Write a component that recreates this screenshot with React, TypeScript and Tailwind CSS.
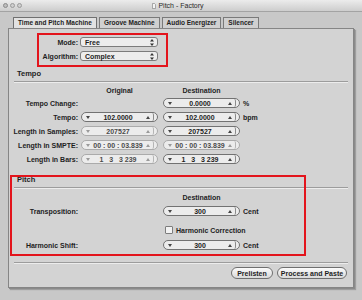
import React from "react";

const Stepper: React.FC<{ value: string; dim?: boolean }> = ({ value, dim }) => (
  <div
    className={`h-[10px] w-[77px] rounded-full border flex items-center pl-[4px] pr-[3px] bg-[#ececec] ${
      dim ? "border-[#ababab] text-[#4a4a4a]" : "border-[#727272] text-[#1c1c1c]"
    }`}
  >
    <svg width="4" height="3" viewBox="0 0 4 3" className="shrink-0">
      <path d="M0 0h4L2 3z" fill={dim ? "#9a9a9a" : "#444"} />
    </svg>
    <span className="flex-1 text-center whitespace-pre leading-none">{value}</span>
    <svg width="4" height="3" viewBox="0 0 4 3" className="shrink-0 mr-[2px]">
      <path d="M0 3h4L2 0z" fill={dim ? "#9a9a9a" : "#444"} />
    </svg>
    <div className={`h-[8px] w-[2px] border-r rounded-r-full ${dim ? "border-[#b5b5b5]" : "border-[#8a8a8a]"}`} />
  </div>
);

const Popup: React.FC<{ label: string; value: string }> = ({ label, value }) => (
  <div className="flex items-center h-[10px]">
    <span className="w-[69px] flex justify-end whitespace-nowrap leading-none">{label}</span>
    <div className="ml-[2px] w-[78px] h-[10px] rounded-[3px] border border-[#7c7c7c] bg-[#ededed] flex items-center pl-[4px] pr-[3px]">
      <span className="flex-1 leading-none">{value}</span>
      <svg width="4" height="7" viewBox="0 0 4 7">
        <path d="M0 2.6h4L2 0z M0 4.4h4L2 7z" fill="#333" />
      </svg>
    </div>
  </div>
);

const Row: React.FC<{
  label: string;
  orig?: string;
  origDim?: boolean;
  dest: string;
  destDim?: boolean;
  unit?: string;
}> = ({ label, orig, origDim, dest, destDim, unit }) => (
  <div className="flex items-center h-[10px]">
    <div className="w-[64px] flex justify-end whitespace-nowrap leading-none">
      <span>{label}</span>
    </div>
    <div className="ml-[3px] w-[77px]">{orig !== undefined && <Stepper value={orig} dim={origDim} />}</div>
    <div className="ml-[5px]">
      <Stepper value={dest} dim={destDim} />
    </div>
    {unit && <span className="ml-[3px] leading-none">{unit}</span>}
  </div>
);

const SectionHeader: React.FC<{ title: string }> = ({ title }) => (
  <div className="h-[15px] flex items-center pl-[3px] border-b border-[#9c9c9c] shadow-[0_1px_0_#ececec] text-[7.5px]">
    {title}
  </div>
);

export default function App() {
  return (
    <div className="relative w-[362px] h-[300px] overflow-hidden bg-[#c4c4c4] font-['Liberation_Sans',Arial,sans-serif] text-[7px] font-bold text-[#1e1e1e]">
      {/* title bar */}
      <div className="h-[12px] bg-gradient-to-b from-[#ececec] to-[#cdcdcd] border-b border-[#a3a3a3] flex items-center relative">
        <div className="flex gap-[2px] pl-[3px]">
          <span className="w-[5px] h-[5px] rounded-full border border-[#8a8a8a] bg-[#bdbdbd]" />
          <span className="w-[5px] h-[5px] rounded-full border border-[#9a9a9a] bg-[#cfcfcf]" />
          <span className="w-[5px] h-[5px] rounded-full border border-[#9a9a9a] bg-[#cfcfcf]" />
        </div>
        <div className="flex-1 flex justify-center items-center gap-[2px] pl-[12px] font-normal text-[#2a2a2a]">
          <svg width="4" height="6" viewBox="0 0 4 6">
            <path d="M0.5 0.5h2l1 1v4h-3z" fill="#f4f4f4" stroke="#7a7a7a" strokeWidth="0.6" />
          </svg>
          <span className="leading-none">Pitch - Factory</span>
        </div>
        <div className="w-[40px]" />
      </div>

      {/* window body */}
      <div className="flex bg-[#c8c8c8] h-[288px]">
        <div className="w-[8px]" />
        <div className="w-[346px] flex flex-col">
          {/* tabs */}
          <div className="flex gap-[2px] pl-[5px] mt-[5px] h-[11px] relative z-10 text-[6.5px]">
            <div className="px-[4px] flex items-center border border-b-0 border-[#707070] bg-[#e2e2e2] rounded-t-[1px]">Time and Pitch Machine</div>
            <div className="px-[4px] flex items-center border border-b-0 border-[#7a7a7a] bg-[#d0d0d0]">Groove Machine</div>
            <div className="px-[4px] flex items-center border border-b-0 border-[#7a7a7a] bg-[#d0d0d0]">Audio Energizer</div>
            <div className="px-[4px] flex items-center border border-b-0 border-[#7a7a7a] bg-[#d0d0d0]">Silencer</div>
          </div>

          {/* panel */}
          <div className="h-[260px] border border-[#858585] bg-[#d3d3d3] shadow-[1px_1px_0_#8a8a8a,2px_2px_1px_#9e9e9e] flex flex-col">
            <div className="pt-[8px] flex flex-col gap-[4px]">
              <Popup label="Mode:" value="Free" />
              <Popup label="Algorithm:" value="Complex" />
            </div>

            <div className="mx-[5px] mt-[6px] flex flex-col">
              <SectionHeader title="Tempo" />
              <div className="flex h-[10px] mt-[3px] items-center">
                <span className="ml-[67px] w-[77px] text-center leading-none">Original</span>
                <span className="ml-[5px] w-[77px] text-center leading-none">Destination</span>
              </div>
              <div className="flex flex-col gap-[4px] mt-[3px]">
                <Row label="Tempo Change:" dest="0.0000" unit="%" />
                <Row label="Tempo:" orig="102.0000" dest="102.0000" unit="bpm" />
                <Row label="Length in Samples:" orig="207527" origDim dest="207527" />
                <Row label="Length in SMPTE:" orig="00 : 00 : 03.839" origDim dest="00 : 00 : 03.839" destDim />
                <Row label="Length in Bars:" orig="1   3   3 239" origDim dest="1   3   3 239" />
              </div>

              <div className="mt-[9px]">
                <SectionHeader title="Pitch" />
              </div>
              <div className="flex h-[10px] mt-[4px] items-center">
                <span className="ml-[149px] w-[77px] text-center leading-none">Destination</span>
              </div>
              <div className="mt-[4px]">
                <Row label="Transposition:" dest="300" unit="Cent" />
              </div>
              <div className="mt-[9px] h-[10px] flex items-center pl-[151px] gap-[3px]">
                <span className="w-[8px] h-[8px] border border-[#7d7d7d] bg-[#f2f2f2] rounded-[1px]" />
                <span className="leading-none">Harmonic Correction</span>
              </div>
              <div className="mt-[5px]">
                <Row label="Harmonic Shift:" dest="300" unit="Cent" />
              </div>

              <div className="mt-[12px] h-px bg-[#9c9c9c] shadow-[0_1px_0_#ececec]" />
              <div className="mt-[4px] flex justify-end gap-[4px] pr-[1px]">
                <button className="h-[12px] w-[42px] rounded-full border border-[#6f6f6f] bg-gradient-to-b from-[#fbfbfb] to-[#d9d9d9] leading-none">
                  Prelisten
                </button>
                <button className="h-[12px] w-[70px] rounded-full border border-[#6f6f6f] bg-gradient-to-b from-[#fbfbfb] to-[#d9d9d9] leading-none">
                  Process and Paste
                </button>
              </div>
            </div>
          </div>
        </div>
        <div className="flex-1" />
      </div>

      {/* red annotation boxes */}
      <div className="absolute left-[37px] top-[33px] w-[131px] h-[34px] border-2 border-[#e3141c]" />
      <div className="absolute left-[10px] top-[175px] w-[296px] h-[81px] border-2 border-[#e3141c]" />
    </div>
  );
}
